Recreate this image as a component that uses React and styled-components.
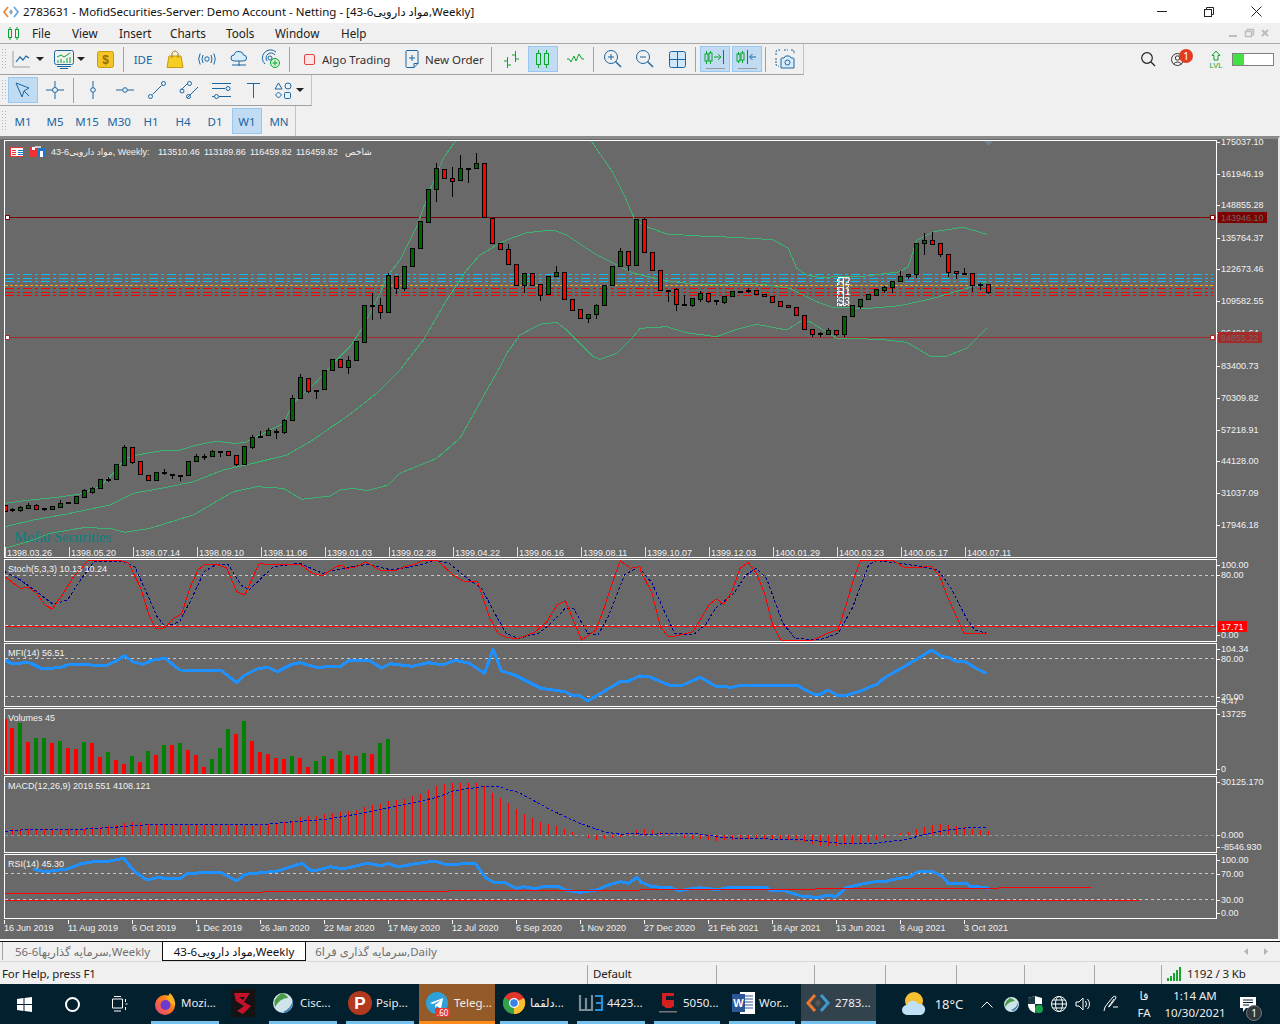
import React from 'react';
import styled, { createGlobalStyle } from 'styled-components';

const UI = '"Noto Sans", "DejaVu Sans", sans-serif';
const CH = '"Liberation Sans", "DejaVu Sans", sans-serif';

const Global = createGlobalStyle`
  html, body { margin: 0; padding: 0; background: #f0f0f0; }
  #root { width: 1280px; height: 1024px; overflow: hidden; }
  * { box-sizing: border-box; }
`;

const Page = styled.div`
  width: 1280px; height: 1024px; display: flex; flex-direction: column;
  font-family: ${UI}; font-size: 12px; color: #111; background: #f0f0f0;
`;

/* ---------- title and menu ---------- */
const TitleBar = styled.div`
  height: 23px; background: #fff; display: flex; align-items: center; padding-left: 3px; flex: none;
`;
const TitleText = styled.div`
  margin-left: 4px; flex: 1; font-size: 11.5px; white-space: nowrap;
`;
const WinBtn = styled.div`
  width: 46px; height: 23px; display: flex; align-items: center; justify-content: center; margin-right: 1px;
`;
const MenuBar = styled.div`
  height: 20px; display: flex; align-items: center; flex: none; padding-left: 7px;
`;
const MenuItem = styled.span`
  font-size: 11.7px; width: ${p => p.$w}px; flex: none; color: #222; line-height: 18px;
`;
const MdiBtns = styled.div`
  margin-left: auto; display: flex; gap: 7px; padding-right: 11px; align-items: center;
`;

/* ---------- toolbars ---------- */
const ToolRow = styled.div`
  height: ${p => p.$h}px; flex: none; display: flex; align-items: stretch;
  border-top: ${p => (p.$first ? '1px solid #a8a8a8' : 'none')};
`;
const ToolBar = styled.div`
  width: ${p => p.$w}px; flex: none; display: flex; align-items: center; gap: 2px;
  border-bottom: ${p => (p.$noBottom ? 'none' : '1px solid #a0a0a0')}; border-right: 1px solid #c4c4c4;
  padding-left: 1px;
`;
const Grip = styled.div`
  width: 5px; height: 22px; flex: none;
  background-image: radial-gradient(#b4b4b4 0.8px, transparent 1px);
  background-size: 3px 3px;
`;
const Btn = styled.div`
  width: ${p => p.$w || 30}px; height: 26px; flex: none; display: flex; align-items: center;
  justify-content: ${p => (p.$pad ? 'flex-start' : 'center')}; padding-left: ${p => p.$pad || 0}px; gap: ${p => p.$gap || 0}px;
  color: ${p => p.$ink || '#1a66a3'}; font-size: 11.5px;
  background: ${p => (p.$on ? '#c1dbf3' : 'transparent')};
  border: 1px solid ${p => (p.$on ? '#97c8f2' : 'transparent')};
  white-space: nowrap; margin-left: ${p => p.$ml || 0}px;
`;
const Sep = styled.div`
  width: 1px; height: 25px; background: #a0a0a0; flex: none; margin: 0 2px 0 1px;
`;
const Arrow = styled.i`
  width: 0; height: 0; border-left: 4px solid transparent; border-right: 4px solid transparent; border-top: 4px solid #222; flex: none;
`;
const Right = styled.div`
  margin-left: auto; display: flex; align-items: center; height: 30px; padding-right: 6px;
`;
const Badge = styled.span`
  position: absolute; left: 8px; top: 0; width: 14px; height: 14px; border-radius: 50%; background: #e33b22; color: #fff;
  font-size: 10px; line-height: 14px; text-align: center;
`;
const BellWrap = styled.div`
  position: relative; width: 24px; height: 20px; display: flex; align-items: center; margin-left: 16px;
`;
const Progress = styled.div`
  width: 42px; height: 13px; border: 1px solid #808080; background: #fff; margin-left: 3px;
`;
const ProgressFill = styled.div`
  width: 11px; height: 100%; background: #43e243;
`;

/* ---------- chart window ---------- */
const ChartWindow = styled.div`
  height: 805px; flex: none; background: #696969; border-top: 3px solid #8a8a8a; border-right: 2px solid #e8e8e8; border-bottom: 2px solid #fff;
  padding: 1px 0 0 4px; display: flex; flex-direction: column; gap: 1px;
`;
const Pane = styled.div`
  display: flex; height: ${p => p.$h}px; flex: none;
`;
const Plot = styled.div`
  width: 1213px; flex: none; border: 1px solid #fff; overflow: hidden;
`;
const Draw = styled.svg`
  display: block; font-family: ${CH}; font-size: 9px;
`;
const AxisDraw = styled.svg`
  display: block; flex: none; font-family: ${CH}; font-size: 9px; overflow: visible;
`;

/* ---------- tabs, status ---------- */
const TabRow = styled.div`
  height: 21px; flex: none; display: flex; align-items: flex-start; padding-left: 2px; border-top: 1px solid #111; border-bottom: 1px solid #d8d8d8;
`;
const Tab = styled.div`
  width: ${p => p.$w}px; height: ${p => (p.$on ? 19 : 18)}px; flex: none; display: flex; align-items: center; justify-content: center;
  font-size: 11.5px; white-space: nowrap; color: ${p => (p.$on ? '#111' : '#707070')};
  background: ${p => (p.$on ? '#fff' : '#f0f0f0')};
  border-left: ${p => (p.$on ? '1px solid #111' : p.$b ? '1px solid #a0a0a0' : 'none')};
  border-right: ${p => (p.$on ? '1.5px solid #111' : 'none')};
  border-bottom: ${p => (p.$on ? '1.5px solid #111' : 'none')};
`;
const TabArrows = styled.div`
  margin-left: auto; display: flex; gap: 15px; padding: 6px 11px 0 0;
`;
const StatusBar = styled.div`
  height: 22px; flex: none; display: flex; align-items: flex-end; font-size: 11.5px; letter-spacing: -0.15px; color: #222; overflow: hidden;
`;
const StatusCell = styled.div`
  width: ${p => p.$w}px; flex: none; height: 19px; display: flex; align-items: center; gap: 5px;
  padding: 0 0 2px ${p => p.$pad || 0}px; border-left: ${p => (p.$line ? '1px solid #a8a8a8' : 'none')}; white-space: nowrap;
`;

/* ---------- taskbar ---------- */
const Taskbar = styled.div`
  height: 40px; flex: none; background: #03202e; display: flex; align-items: stretch; color: #fff; font-size: 11.5px; position: relative;
`;
const TaskIcon = styled.div`
  width: ${p => p.$w || 48}px; flex: none; display: flex; align-items: center; justify-content: center;
`;
const TaskApp = styled.div`
  width: ${p => p.$w}px; margin-left: ${p => p.$ml || 0}px; flex: none; display: flex; align-items: center; gap: ${p => p.$gap || 4}px; padding-left: ${p => p.$pad || 2}px;
  background: ${p => (p.$bg || 'transparent')}; color: #eee; white-space: nowrap; position: relative;
  border-bottom: ${p => (p.$line ? `3px solid ${p.$line}` : 'none')};
  padding-bottom: ${p => (p.$line ? 0 : 3)}px;
`;
const Count = styled.span`
  position: absolute; left: 16px; top: 24px; background: #e53935; color: #fff; font-size: 8px; line-height: 9px; padding: 0 2px; border-radius: 1px;
`;
const Tray = styled.div`
  flex: none; display: flex; align-items: center; width: ${p => p.$w}px; justify-content: center; margin-left: ${p => p.$ml || 0}px;
`;
const TrayText = styled.div`
  flex: none; width: ${p => p.$w}px; margin-left: ${p => p.$ml || 0}px; font-size: ${p => p.$s || 11.5}px; text-align: center; line-height: 17px; color: #eee; align-self: center; white-space: nowrap;
`;
const Note = styled.span`
  position: absolute; right: 18px; top: 21px; width: 16px; height: 16px; border-radius: 50%; background: #30383e; border: 1px solid #777; color: #fff; font-size: 10px; line-height: 14px; text-align: center;
`;

/* ---------- chart data (read from the picture) ---------- */
const C = [
 [15,1096,1112,1094,1112,'r'],[37,1106,1111,1105,1112,'f'],[61,1100,1110,1097,1112,'g'],[85,1095,1103,1090,1104,'g'],[109,1095,1106,1092,1106,'r'],[133,1105,1107,1105,1110,'f'],[157,1099,1106,1099,1106,'g'],[181,1090,1100,1080,1100,'g'],[205,1087,1090,1087,1090,'f'],[229,1069,1088,1069,1088,'g'],[253,1051,1070,1047,1070,'g'],[277,1044,1055,1040,1058,'g'],[301,1018,1043,1018,1043,'g'],[325,1016,1018,1010,1024,'f'],[349,973,1016,973,1016,'g'],[373,921,974,915,974,'g'],[397,922,965,922,968,'r'],[421,964,1003,964,1003,'r'],[445,1004,1021,1004,1021,'r'],[469,996,1021,996,1021,'g'],[493,997,1000,987,1001,'f'],[517,1001,1003,1001,1013,'f'],[541,1004,1006,1004,1020,'f'],[565,964,1004,964,1006,'g'],[589,949,964,942,964,'g'],[613,948,950,942,957,'f'],[637,933,949,929,949,'g'],[661,934,936,934,947,'f'],[685,934,946,934,946,'r'],[709,946,973,946,976,'r'],[733,919,971,919,971,'g'],[757,890,920,885,923,'g'],[781,887,889,873,890,'f'],[805,871,886,864,886,'g'],[829,874,876,868,893,'f'],[853,841,876,838,878,'g'],[877,775,841,765,841,'g'],[901,712,775,702,775,'g'],[925,715,754,715,756,'r'],[949,751,753,751,774,'f'],[973,691,748,691,748,'g'],[997,658,691,658,691,'g'],[1021,658,682,658,682,'r'],[1045,661,682,648,698,'g'],[1069,604,661,604,661,'g'],[1093,496,607,496,607,'g'],[1117,494,496,459,536,'f'],[1141,496,515,474,533,'r'],[1165,405,515,400,515,'g'],[1189,409,443,409,459,'r'],[1213,379,443,379,449,'g'],[1237,325,379,325,379,'g'],[1261,244,325,244,325,'g'],[1285,148,245,148,245,'g'],[1309,85,148,69,182,'g'],[1333,88,115,88,115,'r'],[1357,115,122,82,167,'r'],[1381,85,121,45,121,'g'],[1405,84,86,84,125,'f'],[1429,70,85,40,85,'g'],[1453,70,232,70,232,'r'],[1477,233,310,233,310,'r'],
 [1501,310,328,310,328,'r'],[1525,328,373,312,373,'r'],[1549,373,436,373,436,'r'],[1573,400,436,400,455,'g'],[1597,400,434,400,436,'r'],[1621,433,466,433,480,'r'],[1645,409,463,409,463,'g'],[1669,397,407,378,407,'g'],[1693,397,478,397,478,'r'],[1717,478,509,478,511,'r'],[1741,508,535,508,535,'r'],[1765,523,535,523,545,'g'],[1789,496,523,492,533,'g'],[1813,436,496,436,496,'g'],[1837,379,436,379,436,'g'],[1861,334,379,325,379,'g'],[1885,334,376,334,390,'r'],[1909,238,376,238,376,'g'],[1933,238,337,234,337,'r'],[1957,337,391,337,391,'r'],[1981,391,451,391,451,'r'],[2005,449,451,449,482,'f'],[2029,448,493,445,509,'r'],[2053,492,494,465,494,'f'],[2077,475,494,475,497,'g'],[2101,460,476,454,482,'g'],[2125,460,482,460,485,'r'],[2149,481,483,481,491,'f'],[2173,469,485,469,489,'g'],[2197,454,469,454,469,'g'],[2221,452,454,452,454,'f'],[2245,450,452,445,456,'f'],[2269,451,463,451,463,'r'],[2293,463,469,463,469,'r'],[2317,469,485,469,485,'r'],[2341,484,497,484,497,'r'],[2365,496,502,496,502,'r'],[2389,502,526,502,526,'r'],[2413,526,568,526,568,'r'],[2437,568,583,568,587,'r'],[2461,580,582,576,587,'f'],[2485,571,581,564,581,'g'],[2509,571,581,571,584,'r'],[2533,529,581,529,587,'g'],[2557,496,529,496,529,'g'],[2581,478,497,478,503,'g'],[2605,463,478,463,478,'g'],[2629,448,466,448,466,'g'],[2653,442,449,438,455,'g'],[2677,424,442,424,456,'g'],[2701,409,424,394,424,'g'],[2725,403,409,403,414,'g'],[2749,310,403,310,410,'g'],[2773,301,308,279,341,'g'],[2797,301,311,276,311,'r'],[2821,310,341,310,347,'r'],[2845,341,395,341,407,'r'],[2869,394,400,394,413,'r'],[2893,399,401,385,401,'f'],[2917,400,435,400,452,'r'],[2941,433,435,428,447,'f'],[2965,433,455,433,458,'r'],
];
const UP = [[15,1090],[90,1080],[170,1072],[240,1062],[300,1040],[340,1000],[375,955],[410,945],[480,933],[540,930],[590,915],[650,904],[700,910],[735,908],[790,880],[850,850],[880,790],[905,765],[950,725],[990,680],[1050,620],[1090,560],[1130,480],[1165,405],[1200,360],[1250,260],[1290,150],[1330,55],[1365,5],[1450,-200],[1700,-200],[1775,5],[1840,100],[1870,160],[1905,240],[1940,260],[2000,282],[2100,288],[2200,292],[2300,298],[2320,300],[2365,325],[2390,385],[2420,405],[2460,412],[2600,408],[2700,395],[2725,380],[2750,300],[2800,275],[2890,262],[2960,283]];
const MID = [[15,1160],[100,1140],[200,1122],[330,1095],[400,1060],[500,1042],[580,1025],[670,990],[760,970],[860,945],[930,905],[1040,830],[1130,760],[1200,690],[1270,600],[1340,480],[1400,390],[1440,345],[1500,310],[1520,300],[1580,278],[1660,270],[1700,285],[1790,345],[1900,400],[2000,422],[2100,435],[2250,430],[2300,435],[2370,445],[2450,485],[2500,503],[2610,505],[2700,497],[2800,475],[2900,445],[2960,425]];
const LOW = [[15,1225],[100,1200],[150,1180],[250,1163],[330,1165],[375,1177],[450,1165],[580,1125],[700,1055],[770,1040],[850,1045],[905,1078],[990,1068],[1020,1050],[1060,1045],[1100,1052],[1165,1035],[1200,1000],[1310,955],[1380,895],[1500,680],[1520,640],[1560,585],[1620,553],[1670,547],[1700,570],[1780,650],[1800,658],[1850,640],[1900,590],[1920,565],[2000,560],[2060,578],[2150,590],[2210,568],[2270,553],[2360,570],[2400,545],[2430,545],[2510,595],[2640,598],[2720,607],[2790,648],[2840,648],[2900,625],[2960,565]];

const Z = 2.45;
const join = (a, b) => [...a.map(([x, y]) => [x / Z, y / 3 + 555]), ...b.map(([x, y]) => [640 + x / Z, y / 3 + 555])];
const path3 = pts => pts.map(([x, y]) => `${(x / 3).toFixed(1)},${(y / 3 + 140).toFixed(1)}`).join(' ');
const pathS = pts => pts.map(([x, y]) => `${x.toFixed(1)},${y.toFixed(1)}`).join(' ');

const STOCH = join(
 [[12,65],[50,100],[70,97],[90,115],[110,150],[128,162],[150,125],[180,65],[215,18],[250,17],[290,15],[315,25],[345,100],[365,180],[382,222],[405,218],[425,190],[445,178],[465,100],[485,45],[500,30],[530,28],[555,38],[580,110],[600,120],[635,25],[665,30],[700,27],[735,27],[765,55],[790,62],[820,38],[835,30],[850,40],[875,35],[895,20],[930,45],[970,47],[990,35],[1010,30],[1040,15],[1070,15],[1110,60],[1135,78],[1170,80],[1200,190],[1220,235],[1240,248],[1270,250],[1310,232],[1340,200],[1365,150],[1385,137],[1425,255],[1460,225],[1480,160],[1505,65],[1520,17],[1545,40],[1568,35]],
 [[0,45],[30,115],[50,215],[70,246],[90,242],[130,230],[170,148],[188,132],[205,148],[225,110],[245,40],[265,22],[285,55],[305,115],[325,210],[345,255],[420,257],[465,232],[485,225],[505,150],[525,65],[540,17],[620,17],[650,38],[715,35],[735,65],[750,115],[790,225],[795,235],[850,235]]);
const STOCH2 = join(
 [[12,50],[50,75],[90,110],[130,148],[165,135],[200,70],[230,20],[300,18],[330,35],[360,115],[385,185],[405,215],[440,200],[470,130],[500,50],[530,28],[560,30],[590,90],[610,105],[640,70],[670,35],[735,25],[790,55],[840,40],[900,28],[960,45],[1030,30],[1065,15],[1100,25],[1150,75],[1180,100],[1210,170],[1240,235],[1270,250],[1320,235],[1350,205],[1385,160],[1405,160],[1440,235],[1465,240],[1490,185],[1530,60],[1568,33]],
 [[0,40],[30,85],[60,170],[85,235],[130,240],[160,210],[185,160],[230,115],[260,60],[285,40],[310,70],[350,205],[380,250],[440,255],[485,235],[520,160],[560,30],[580,17],[640,25],[690,35],[730,45],[760,95],[800,190],[820,225],[850,235]]);
const MFI = join(
 [[12,315],[30,327],[70,322],[105,342],[150,337],[170,327],[260,332],[285,318],[305,302],[325,320],[350,328],[375,315],[405,310],[440,345],[490,346],[540,345],[580,382],[600,360],[630,342],[655,337],[680,350],[715,328],[735,323],[775,337],[835,334],[855,316],[905,316],[935,340],[955,326],[1010,334],[1050,323],[1085,330],[1115,316],[1150,325],[1187,355],[1208,283],[1228,347],[1260,360],[1325,400],[1385,410],[1405,423],[1420,422],[1440,438],[1520,380],[1540,378],[1568,362]],
 [[0,364],[25,366],[70,390],[105,390],[148,367],[185,393],[225,397],[245,391],[350,393],[385,391],[425,418],[440,419],[460,405],[485,422],[505,421],[540,408],[580,388],[600,368],[675,315],[715,285],[740,305],[755,307],[775,319],[795,319],[830,345],[850,355]]);
const RSI = join(
 [[80,942],[110,950],[165,942],[200,926],[240,918],[270,918],[303,910],[330,950],[360,975],[385,968],[440,972],[460,955],[540,952],[580,978],[600,958],[680,948],[740,925],[760,945],[780,945],[810,935],[840,942],[900,925],[935,932],[950,925],[975,936],[1010,928],[1065,918],[1090,928],[1165,926],[1190,968],[1210,982],[1235,982],[1265,1000],[1285,995],[1310,1001],[1340,993],[1365,993],[1385,1005],[1420,1012],[1465,1004],[1490,990],[1520,980],[1540,985],[1560,968],[1568,975]],
 [[0,980],[30,995],[75,998],[95,1007],[120,1002],[145,998],[190,1004],[220,997],[270,996],[310,998],[320,1007],[355,1008],[400,1025],[440,1027],[460,1020],[480,1025],[505,998],[540,988],[575,980],[605,978],[630,971],[660,966],[680,950],[715,949],[740,963],[755,985],[800,985],[810,995],[850,997],[853,1005]]);
const MACD_SIG = join(
 [[12,829],[60,824],[200,823],[300,815],[330,811],[400,808],[500,810],[650,808],[720,800],[800,793],[900,772],[1000,747],[1070,727],[1110,708],[1180,695],[1220,695],[1270,712],[1350,765],[1420,805],[1480,830],[1520,838],[1568,835]],
 [[0,838],[30,838],[70,835],[140,836],[200,847],[250,851],[380,853],[430,857],[490,865],[580,864],[650,854],[700,838],[760,824],[810,817],[850,817]]);
const VOL = [[12,'r',492],[29,'r',519],[49,'g',505],[69,'r',561],[88,'g',549],[108,'g',549],[127,'r',564],[147,'g',558],[167,'r',579],[186,'r',582],[206,'g',561],[225,'r',564],[245,'r',606],[265,'g',591],[284,'r',615],[304,'r',627],[323,'g',603],[343,'r',621],[362,'g',588],[382,'r',600],[402,'g',570],[421,'r',570],[441,'g',564],[461,'r',585],[480,'r',600],[500,'r',636],[519,'g',612],[539,'g',579],[559,'g',522],[578,'r',537],[598,'g',498],[617,'r',558],[637,'r',591],[657,'r',597],[676,'r',609],[696,'r',612],[716,'g',603],[735,'r',609],[755,'r',636],[774,'g',618],[794,'g',603],[813,'r',612],[833,'g',588],[853,'r',600],[872,'r',603],[892,'g',594],[911,'r',597],[931,'g',564],[951,'g',552]];
const HIST = [823,823,823,823,823,823,823,823,822,822,817,817,813,809,803,800,804,806,807,807,809,809,811,808,811,810,811,811,810,812,812,809,806,805,802,797,786,783,783,777,774,772,769,766,757,751,747,739,736,732,724,718,706,694,688,685,685,685,685,694,715,730,744,762,778,790,802,808,814,823,832,840,850,855,852,850,845,835,826,
 822,826,832,838,840,850,852,852,854,858,856,854,854,852,852,852,854,854,856,858,860,866,872,872,873,870,868,866,860,855,850,840,835,830,822,816,810,807,810,812,816,821,825,828];

const Levels = ({ ys }) => ys.map(y => <line key={y} x1="5" x2="1216" y1={y + 0.5} y2={y + 0.5} stroke="#c8c8c8" strokeDasharray="3 3" shapeRendering="crispEdges" />);

const Candles = () => (
  <g shapeRendering="crispEdges">
    {C.map(([zx, t, b, wt, wb, k]) => {
      const cx = Math.round(zx / 3);
      const Y = v => Math.round(v / 3 + 140);
      if (k === 'f') {
        return (
          <g key={zx}>
            <line x1={cx + 0.5} x2={cx + 0.5} y1={Y(wt)} y2={Y(wb) + 1} stroke="#000" />
            <rect x={cx - 2} y={Y(t)} width="5" height="1.5" fill="#000" />
          </g>
        );
      }
      return (
        <g key={zx}>
          <line x1={cx + 0.5} x2={cx + 0.5} y1={Y(wt)} y2={Y(wb) + 1} stroke="#000" />
          <rect x={cx - 1.5} y={Y(t) + 0.5} width="4" height={Math.max(1, Y(b) - Y(t))} fill={k === 'g' ? '#006400' : '#ff0000'} stroke="#000" />
        </g>
      );
    })}
  </g>
);

const DD = ({ y, c, d = '9 3 3 3' }) => <line x1="5" x2="1213" y1={y + 0.5} y2={y + 0.5} stroke={c} strokeDasharray={d} shapeRendering="crispEdges" />;
const Handle = ({ x, y, c }) => <rect x={x - 2.5} y={y - 2} width="4" height="4" fill="#fff" stroke={c} shapeRendering="crispEdges" />;
const Curve = ({ pts, c, w = 1, d }) => <polyline points={pts} fill="none" stroke={c} strokeWidth={w} strokeDasharray={d} shapeRendering="crispEdges" strokeLinejoin="round" />;

const T = ({ x, y, c = '#f2f2f2', children, a }) => <text x={x} y={y} fill={c} textAnchor={a}>{children}</text>;

const MainLabels = ['1398.03.26','1398.05.20','1398.07.14','1398.09.10','1398.11.06','1399.01.03','1399.02.28','1399.04.22','1399.06.16','1399.08.11','1399.10.07','1399.12.03','1400.01.29','1400.03.23','1400.05.17','1400.07.11'];
const TimeLabels = ['16 Jun 2019','11 Aug 2019','6 Oct 2019','1 Dec 2019','26 Jan 2020','22 Mar 2020','17 May 2020','12 Jul 2020','6 Sep 2020','1 Nov 2020','27 Dec 2020','21 Feb 2021','18 Apr 2021','13 Jun 2021','8 Aug 2021','3 Oct 2021'];

const Sym = 'مواد دارویی6-43';

const MainPlot = () => (
  <Draw width="1211" height="416" viewBox="5 141 1211 416">
    <text x="14" y="541.5" fontFamily='"Liberation Serif", serif' fontSize="14.5" fill="#0a8080">Mofid Securities</text>
    <DD y={274} c="#00bfff" /><DD y={278} c="#00bfff" /><DD y={281} c="#00bfff" />
    <DD y={285} c="#ffa500" d="3 2" />
    <DD y={288} c="#ff0000" /><DD y={292} c="#ff0000" /><DD y={295} c="#ff0000" />
    <line x1="5" x2="1216" y1="217.5" y2="217.5" stroke="#7f0000" shapeRendering="crispEdges" />
    <line x1="5" x2="1216" y1="337.5" y2="337.5" stroke="#a52a2a" shapeRendering="crispEdges" />
    <Curve pts={path3(UP)} c="#3cb371" />
    <Curve pts={path3(MID)} c="#3cb371" />
    <Curve pts={path3(LOW)} c="#3cb371" />
    <Candles />
    <Handle x={8} y={217} c="#7f0000" /><Handle x={1213} y={217} c="#7f0000" />
    <Handle x={8} y={337} c="#a52a2a" /><Handle x={1213} y={337} c="#a52a2a" />
    <g fontSize="10">
      <T x="837.5" y="285" c="#fff">R2</T>
      <T x="837.5" y="295" c="#fff">R1</T>
      <T x="837.5" y="305" c="#fff">S3</T>
    </g>
    <rect x="837.5" y="277.5" width="6" height="28" fill="none" stroke="#fff" strokeDasharray="3 1" shapeRendering="crispEdges" />
    <rect x="843.5" y="277.5" width="5" height="28" fill="none" stroke="#e8e8e8" strokeDasharray="2 2" shapeRendering="crispEdges" />
    <polygon points="984,141 993,141 988.5,146" fill="#708090" />
    {/* header icons */}
    <g shapeRendering="crispEdges">
      <rect x="10.5" y="147.5" width="13" height="9" fill="#fff" stroke="#e33" />
      <path d="M12 150h4M12 152h4M12 154h4" stroke="#e33" />
      <path d="M18 150h5M18 152h5M18 154h5" stroke="#1c78c8" />
      <rect x="30" y="147" width="7" height="10" fill="#e33" />
      <rect x="32" y="147" width="3" height="3" fill="#fff" />
      <rect x="38" y="148" width="7" height="9" fill="#1c78c8" />
      <rect x="40" y="151" width="3" height="6" fill="#fff" />
      <rect x="35" y="146" width="6" height="2" fill="#ccc" />
    </g>
    <T x="51" y="155">{`${Sym}, Weekly:`}</T>
    <T x="158" y="155">113510.46</T>
    <T x="204" y="155">113189.86</T>
    <T x="250" y="155">116459.82</T>
    <T x="296" y="155">116459.82</T>
    <T x="345" y="155">شاخص</T>
    {MainLabels.map((t, i) => (
      <g key={t}>
        <line x1={5.5 + i * 64} x2={5.5 + i * 64} y1="547" y2="557" stroke="#cfe8cf" shapeRendering="crispEdges" />
        <T x={7 + i * 64} y="556">{t}</T>
      </g>
    ))}
  </Draw>
);

const Axis = ({ top, h, ticks, children }) => (
  <AxisDraw width="61" height={h} viewBox={`1217 ${top} 61 ${h}`}>
    {ticks.map(([y, t]) => (
      <g key={t}>
        <line x1="1217" x2="1220" y1={Math.round(y) + 0.5} y2={Math.round(y) + 0.5} stroke="#fff" shapeRendering="crispEdges" />
        <T x="1221" y={y + 3}>{t}</T>
      </g>
    ))}
    {children}
  </AxisDraw>
);
const Box = ({ x, y, w, h, c }) => <rect x={x} y={y} width={w} height={h} fill={c} />;

/* ---------- toolbar icons ---------- */
const I = styled.svg`
  display: block; flex: none; overflow: visible;
`;
const ink = '#1a66a3';
const grn = '#0aa52c';
const LineIco = () => (<I width="20" height="18" fill="none"><path d="M1 1v16h17" stroke="#9aa0a6"/><path d="M4 12l4-5 3 3 3-4 3 2" stroke={ink} strokeWidth="1.2"/></I>);
const MonitorIco = () => (<I width="20" height="19" fill="none"><rect x="0.5" y="0.5" width="19" height="14" rx="2" stroke={ink}/><path d="M3 7l4-2 3 2 6-4" stroke={grn}/><path d="M4 13v-3M7 13V9M10 13v-2M13 13V8M16 13V7" stroke={grn}/><path d="M3 16.5h14M6 18.5h8" stroke={ink}/></I>);
const DollarIco = () => (<I width="17" height="17"><rect x="0.5" y="0.5" width="16" height="16" rx="2" fill="#f5c425" stroke="#c99a12"/><text x="8.5" y="13" fontSize="12" fontWeight="700" textAnchor="middle" fill="#9a6a00" fontFamily={CH}>$</text></I>);
const BagIco = () => (<I width="16" height="18" fill="none"><path d="M2 6h12l2 11.5H0z" fill="#f7cd22" stroke="#c99a12"/><path d="M5 8V3q3-4 6 0v5" stroke="#a87c10"/></I>);
const RadioIco = () => (<I width="18" height="12" fill="none" stroke={ink}><circle cx="9" cy="6" r="2.2"/><path d="M5 2q-2 4 0 8M13 2q2 4 0 8M2.2 .5q-3 5.5 0 11M15.8 .5q3 5.5 0 11"/></I>);
const CloudIco = () => (<I width="18" height="16" fill="none" stroke={ink}><path d="M4 10a3 3 0 0 1 0-6q1-4 5-3.5 4 0 4.5 3.5a3 3 0 0 1 0 6z" fill="#d8ecfa"/><path d="M9 10v5M2 14h14"/></I>);
const RingIco = () => (<I width="18" height="18" fill="none"><path d="M14 2A8 8 0 1 0 3 14M13 5A5 5 0 1 0 5 11" stroke={ink}/><circle cx="8" cy="8" r="2" stroke={ink}/><circle cx="13" cy="13" r="4.5" fill="#d4f5d4" stroke={grn}/><path d="M13 10.5v5M10.5 13h5" stroke={grn}/></I>);
const DocIco = () => (<I width="14" height="18" fill="none" stroke={ink}><path d="M1 1.5q0-1 1-1h10q1 0 1 1v12l-4 4H2q-1 0-1-1z"/><path d="M7 5v6M4 8h6"/><path d="M13 13.5H9v4"/></I>);
const BarsIco = () => (<I width="17" height="17" fill="none" stroke={grn}><path d="M4.5 6v11M4.5 10H1M4.5 14H8M12.5 0v11M12.5 4H9M12.5 8H16"/></I>);
const CandIco = () => (<I width="14" height="18" fill="none" stroke={grn}><path d="M2.5 0v3M2.5 15v3M10.5 0v3M10.5 15v3"/><rect x=".5" y="3.5" width="4" height="11"/><rect x="8.5" y="3.5" width="4" height="11"/></I>);
const WaveIco = () => (<I width="17" height="10" fill="none" stroke={grn}><path d="M0 5h2l2 3 3-6 2 5 3-7 3 5h2"/></I>);
const MagIco = ({ plus }) => (<I width="18" height="18" fill="none" stroke={ink}><circle cx="7" cy="7" r="6.5"/><path d="M4 7h6"/>{plus && <path d="M7 4v6"/>}<path d="M11.5 11.5L17 17" strokeWidth="1.4"/></I>);
const GridIco = () => (<I width="17" height="17"><rect x=".5" y=".5" width="16" height="16" rx="2" fill="#cfe8fb" stroke={ink}/><path d="M8.5 1v15M1 8.5h15" stroke={ink}/></I>);
const ScrollIco = ({ flip }) => (
  <I width="20" height="19" fill="none">
    {flip ? (<><path d="M1.5 2v3M1.5 11v2M5.5 1v2M5.5 10v3" stroke={grn}/><rect x="0" y="4" width="3" height="7" stroke={grn}/><rect x="4" y="3" width="3" height="7" stroke={grn}/><path d="M10.5 0v14" stroke={ink}/><path d="M19 7h-6M15.5 4l-3 3 3 3" stroke={ink}/></>)
    : (<><path d="M1.5 1v3M1.5 11v3M5.5 1v2M5.5 11v3" stroke={grn}/><rect x="0" y="4" width="3" height="7" stroke={grn}/><rect x="4" y="3" width="3" height="8" stroke={grn}/><path d="M9 7h7M13 4l3 3-3 3" stroke={grn}/><path d="M18.5 0v14" stroke={ink}/></>)}
    <path d="M1 18.5h19" stroke="#9a9a9a"/>
  </I>
);
const CamIco = () => (<I width="20" height="20" fill="none" stroke={ink}><path d="M1 6V3q0-2 2-2h3M9 1h4M16 1h2q1 0 1 2v2M1 9v6q0 2 2 2h1" strokeDasharray="2 1"/><path d="M6 19V10q0-1 1-1h2l1.5-2h4L16 9h2q1 0 1 1v9z" fill="#d8ecfa"/><circle cx="12.5" cy="13.5" r="2.5"/></I>);
const CursorIco = () => (<I width="16" height="16" fill="none" stroke={ink}><path d="M1 1l13 5-5 3-2 6z" /><path d="M9 9l5 5"/></I>);
const CrossIco = () => (<I width="18" height="18" fill="none" stroke={ink}><path d="M9 0v6M9 12v6M0 9h6M12 9h6"/><circle cx="9" cy="9" r="2.5"/></I>);
const VIco = () => (<I width="6" height="18" fill="none" stroke={ink}><path d="M3 0v6.5M3 11.5V18"/><circle cx="3" cy="9" r="2.3"/></I>);
const HIco = () => (<I width="18" height="6" fill="none" stroke={ink}><path d="M0 3h6.5M11.5 3H18"/><circle cx="9" cy="3" r="2.3"/></I>);
const TrendIco = () => (<I width="18" height="18" fill="none" stroke={ink}><path d="M4.5 13.5L13.5 4.5"/><circle cx="2.5" cy="15.5" r="2"/><circle cx="15.5" cy="2.5" r="2"/></I>);
const ChanIco = () => (<I width="19" height="18" fill="none" stroke={ink}><path d="M1 9l7-7M7 17l11-11"/><circle cx="2" cy="10" r="2"/><circle cx="9.5" cy="2.5" r="2" /><circle cx="8.5" cy="15.5" r="2"/></I>);
const FibIco = () => (<I width="19" height="16" fill="none" stroke={ink}><path d="M0 1.5h19M0 6.5h13M0 14.5h2"/><path d="M7 14.5h12"/><circle cx="16" cy="6.5" r="2"/><circle cx="4.5" cy="14.5" r="2"/></I>);
const TIco = () => (<I width="13" height="15" fill="none" stroke={ink}><path d="M0 .5h13M6.5 .5V15"/></I>);
const ShapesIco = () => (<I width="18" height="17" fill="none" stroke={ink}><path d="M4.5 1L8 7H1z"/><circle cx="14" cy="4" r="3"/><path d="M4.5 10l3 3-3 3-3-3z"/><rect x="10.5" y="10.5" width="6" height="6" rx="1"/></I>);
const SearchIco = () => (<I width="14" height="14" fill="none" stroke="#222" strokeWidth="1.2"><circle cx="6" cy="6" r="5.3"/><path d="M10 10l4 4"/></I>);
const UserIco = () => (<I width="13" height="13" fill="none" stroke="#333"><circle cx="6.5" cy="6.5" r="6"/><circle cx="6.5" cy="5" r="2.2"/><path d="M2.5 11q4-4 8 0"/></I>);
const LvlIco = () => (<I width="14" height="17"><path d="M7 0l4 4.5H9V9H5V4.5H3z" fill="none" stroke={grn}/><text x="7" y="16.5" fontSize="7.5" textAnchor="middle" fontFamily={CH} fill={grn}>LVL</text></I>);
const Logo = () => (<I width="16" height="12" fill="none" strokeWidth="1.8"><path d="M5 1L1 6l4 5" stroke="#ef8a3c"/><path d="M11 1l4 5-4 5" stroke="#6aa9d8"/><path d="M8 3l-2 3 2 3 2-3z" fill="#9aa6b0"/></I>);
const MenuCandles = () => (<I width="13" height="13" fill="none" stroke={grn}><path d="M3 0v2.5M3 10.5V13M10 0v2.5M10 10.5V13"/><rect x="1.5" y="2.5" width="3" height="8"/><rect x="8.5" y="2.5" width="3" height="8"/></I>);

/* taskbar icons */
const WinIco = () => (<I width="15" height="15" fill="#fff"><path d="M0 2l6.5-1v6H0zM7.5 1L15 0v7H7.5zM0 8h6.5v6L0 13zM7.5 8H15v7l-7.5-1z"/></I>);
const FoxIco = () => (<I width="22" height="24"><defs><linearGradient id="fx" x1="0" y1="1" x2="1" y2="0"><stop offset="0" stopColor="#e03a8c"/><stop offset="0.6" stopColor="#ff7a1a"/><stop offset="1" stopColor="#ffc21a"/></linearGradient></defs><circle cx="11" cy="14" r="10" fill="url(#fx)"/><path d="M16 2q6 6 5 13-6-4-8-8z" fill="#ffb020"/><circle cx="11.5" cy="14" r="5" fill="#6a3bd0"/></I>);
const RedSIco = () => (<I width="24" height="28"><rect width="24" height="28" fill="#141414"/><path d="M3 4h16l-6 9 7 4-8 8-6-3 7-5-8-5z" fill="#c5112a"/><path d="M8 8h6l-2 3z" fill="#141414"/></I>);
const GlobeIco = () => (<I width="22" height="26"><circle cx="11" cy="13" r="10" fill="#cfe3ea"/><path d="M3 17q-3-8 7-14 5 2 6 5-8 0-13 9z" fill="#4a9a45"/><path d="M21 9q1 9-7 14l-3-1q9-4 10-13z" fill="#3d7fb5"/></I>);
const PsiIco = () => (<I width="24" height="24"><circle cx="12" cy="12" r="12" fill="#b2391e"/><text x="12" y="18" textAnchor="middle" fontSize="17" fontWeight="700" fill="#fff" fontFamily={CH}>P</text></I>);
const TeleIco = () => (<I width="22" height="22"><circle cx="11" cy="11" r="11" fill="#2ea0da"/><path d="M4 11l13-5-2 11-4-3-2 2v-3l6-5-8 4z" fill="#fff"/></I>);
const ChromeIco = () => (<I width="22" height="22"><circle cx="11" cy="11" r="11" fill="#e0352b"/><path d="M11 11L1.5 5.5A11 11 0 0 0 11 22z" fill="#2fa34b" /><path d="M11 11V22A11 11 0 0 0 21 6z" fill="#fbc02d"/><circle cx="11" cy="11" r="5" fill="#fff"/><circle cx="11" cy="11" r="3.8" fill="#3b82e8"/></I>);
const W3Ico = () => (<I width="24" height="18" fill="none" strokeWidth="2.2"><path d="M1 1v15h6V4M7 16h6V1" stroke="#7d8d97"/><path d="M16 2h7v14h-7M17 9h6" stroke="#2b8fd6"/></I>);
const GIco = () => (<I width="18" height="20"><path d="M3 0h12v3H7v4h8v6l-3 2H7l-4-3z" fill="#d32020"/><rect x="0" y="18" width="18" height="1.5" fill="#777"/></I>);
const WordIco = () => (<I width="23" height="24"><rect x="8" y="1" width="15" height="22" fill="#fff"/><path d="M11 5h10M11 8h10M11 11h10M11 14h10M11 17h10" stroke="#2b5797"/><rect y="3" width="13" height="18" fill="#2b5797"/><text x="6.5" y="16" fontSize="11" fontWeight="700" textAnchor="middle" fill="#fff" fontFamily={CH}>W</text></I>);
const MtIco = () => (<I width="24" height="20" fill="none" strokeWidth="3"><path d="M9 2L2 10l7 8" stroke="#e8792e"/><path d="M15 2l7 8-7 8" stroke="#3d9ad1"/><path d="M12 6l-3 4 3 4 3-4z" fill="#555" stroke="none"/></I>);
const WeatherIco = () => (<I width="24" height="24"><circle cx="12" cy="9" r="9" fill="#f7c02f"/><path d="M5 23a5 5 0 0 1 0-10 6 6 0 0 1 11-1 5.5 5.5 0 0 1 3 11z" fill="#bfe0f7"/></I>);

const TB = ({ children, on, w, ink: c, gap, pad, ml }) => <Btn $on={on} $w={w} $ink={c} $gap={gap} $pad={pad} $ml={ml}>{children}</Btn>;

export default function App() {
  return (
    <Page>
      <Global />
      <TitleBar>
        <Logo />
        <TitleText>2783631 - MofidSecurities-Server: Demo Account - Netting - [{Sym},Weekly]</TitleText>
        <WinBtn><I width="10" height="1"><rect width="10" height="1" fill="#222" /></I></WinBtn>
        <WinBtn><I width="10" height="10" fill="none" stroke="#222"><path d="M2.5 2.5v-2h7v7h-2"/><rect x=".5" y="2.5" width="7" height="7"/></I></WinBtn>
        <WinBtn><I width="11" height="11" fill="none" stroke="#222"><path d="M.5 .5l10 10M10.5 .5l-10 10"/></I></WinBtn>
      </TitleBar>
      <MenuBar>
        <MenuItem $w={25}><MenuCandles /></MenuItem>
        <MenuItem $w={40}>File</MenuItem>
        <MenuItem $w={47}>View</MenuItem>
        <MenuItem $w={51}>Insert</MenuItem>
        <MenuItem $w={56}>Charts</MenuItem>
        <MenuItem $w={49}>Tools</MenuItem>
        <MenuItem $w={66}>Window</MenuItem>
        <MenuItem $w={40}>Help</MenuItem>
        <MdiBtns>
          <I width="9" height="8"><rect y="6" width="8" height="2" fill="#bdbdbd" /></I>
          <I width="9" height="8" fill="none" stroke="#bdbdbd" strokeWidth="1.5"><path d="M2.5 2V.5h6v5H7"/><rect x=".5" y="2.5" width="6" height="5"/></I>
          <I width="8" height="8" fill="none" stroke="#bdbdbd" strokeWidth="2"><path d="M1 1l6 6M7 1L1 7"/></I>
        </MdiBtns>
      </MenuBar>
      <ToolRow $first $h={32}>
        <ToolBar $w={804}>
          <Grip />
          <TB w={40} gap={4}><LineIco /><Arrow /></TB>
          <TB w={38} gap={3}><MonitorIco /><Arrow /></TB>
          <TB><DollarIco /></TB>
          <Sep />
          <TB>IDE</TB>
          <TB><BagIco /></TB>
          <TB><RadioIco /></TB>
          <TB><CloudIco /></TB>
          <TB><RingIco /></TB>
          <Sep />
          <TB w={100} ink="#333" gap={7} pad={9}><I width="11" height="11"><rect x=".5" y=".5" width="10" height="10" rx="1.5" fill="#fde5e5" stroke="#e34545" /></I>Algo Trading</TB>
          <TB w={92} ink="#333" gap={6} pad={8}><DocIco />New Order</TB>
          <Sep />
          <TB><BarsIco /></TB>
          <TB on><CandIco /></TB>
          <TB><WaveIco /></TB>
          <Sep />
          <TB><MagIco plus /></TB>
          <TB><MagIco /></TB>
          <TB><GridIco /></TB>
          <Sep />
          <TB on><ScrollIco /></TB>
          <TB on><ScrollIco flip /></TB>
          <Sep />
          <TB><CamIco /></TB>
        </ToolBar>
        <Right>
          <SearchIco />
          <BellWrap><UserIco /><Badge>1</Badge></BellWrap>
          <TB w={26} ml={8}><LvlIco /></TB>
          <Progress><ProgressFill /></Progress>
        </Right>
      </ToolRow>
      <ToolRow $h={31}>
        <ToolBar $w={312}>
          <Grip />
          <TB on><CursorIco /></TB>
          <TB><CrossIco /></TB>
          <Sep />
          <TB><VIco /></TB>
          <TB><HIco /></TB>
          <TB><TrendIco /></TB>
          <TB><ChanIco /></TB>
          <TB><FibIco /></TB>
          <TB><TIco /></TB>
          <TB w={38} gap={4}><ShapesIco /><Arrow /></TB>
        </ToolBar>
      </ToolRow>
      <ToolRow $h={30}>
        <ToolBar $w={296} $noBottom>
          <Grip />
          {['M1', 'M5', 'M15', 'M30', 'H1', 'H4', 'D1', 'W1', 'MN'].map(t => <TB key={t} on={t === 'W1'}>{t}</TB>)}
        </ToolBar>
      </ToolRow>

      <ChartWindow>
        <Pane $h={418}>
          <Plot><MainPlot /></Plot>
          <Axis top={140} h={418} ticks={[[142,'175037.10'],[173.5,'161946.19'],[205,'148855.28'],[237.5,'135764.37'],[269,'122673.46'],[301,'109582.55'],[333,'96491.64'],[365.5,'83400.73'],[397.5,'70309.82'],[429.5,'57218.91'],[461,'44128.00'],[493,'31037.09'],[525,'17946.18']]}>
            <Box x={1218} y={212} w={49} h={11} c="#7f0000" />
            <T x="1221" y={221} c="#696969">143946.10</T>
            <Box x={1218} y={332} w={44} h={11} c="#a52a2a" />
            <T x="1221" y={341} c="#696969">94855.22</T>
          </Axis>
        </Pane>
        <Pane $h={83}>
          <Plot>
            <Draw width="1211" height="81" viewBox="5 560 1211 81">
              <Levels ys={[575, 625]} />
              <line x1="5" x2="1216" y1="626.5" y2="626.5" stroke="#ff0000" shapeRendering="crispEdges" />
              <Curve pts={pathS(STOCH2)} c="#00008b" d="3 2" />
              <Curve pts={pathS(STOCH)} c="#ff0000" />
              <T x="8" y="571.5">Stoch(5,3,3) 10.13 10.24</T>
            </Draw>
          </Plot>
          <Axis top={559} h={83} ticks={[[564.5,'100.00'],[575,'80.00'],[635,'0.00']]}>
            <Box x={1218} y={621} w={29} h={11} c="#ff0000" />
            <T x="1221" y={630}>17.71</T>
          </Axis>
        </Pane>
        <Pane $h={64}>
          <Plot>
            <Draw width="1211" height="62" viewBox="5 644 1211 62">
              <Levels ys={[658, 696]} />
              <Curve pts={pathS(MFI)} c="#1e90ff" w={3} />
              <T x="8" y="656">MFI(14) 56.51</T>
            </Draw>
          </Plot>
          <Axis top={643} h={64} ticks={[[648.5,'104.34'],[658.5,'80.00'],[696.5,'20.00'],[701,'4.47']]} />
        </Pane>
        <Pane $h={67}>
          <Plot>
            <Draw width="1211" height="65" viewBox="5 709 1211 65">
              <g shapeRendering="crispEdges">
                {VOL.map(([x, k, t]) => {
                  const px = Math.round(x / Z), top = Math.round(t / 3 + 555);
                  return <rect key={x} x={px - 2} y={top} width="4" height={774 - top} fill={k === 'g' ? '#008000' : '#ff0000'} />;
                })}
              </g>
              <T x="8" y="721">Volumes 45</T>
            </Draw>
          </Plot>
          <Axis top={708} h={67} ticks={[[713.5,'13725'],[768.5,'0']]} />
        </Pane>
        <Pane $h={77}>
          <Plot>
            <Draw width="1211" height="75" viewBox="5 777 1211 75">
              <line x1="5" x2="1216" y1="835.5" y2="835.5" stroke="#8a9aa8" strokeDasharray="3 3" shapeRendering="crispEdges" />
              <g shapeRendering="crispEdges">
                {HIST.map((t, i) => {
                  const x = 12 + i * 8;
                  const y = Math.round(t / 3 + 555);
                  return <line key={i} x1={x + 0.5} x2={x + 0.5} y1={Math.min(y, 835)} y2={Math.max(y, 835)} stroke="#ff0000" />;
                })}
              </g>
              <Curve pts={pathS(MACD_SIG)} c="#0000cd" d="3 2" />
              <T x="8" y="789">MACD(12,26,9) 2019.551 4108.121</T>
            </Draw>
          </Plot>
          <Axis top={776} h={77} ticks={[[781.5,'30125.170'],[834.5,'0.000'],[846.5,'-8546.930']]} />
        </Pane>
        <Pane $h={65}>
          <Plot>
            <Draw width="1211" height="63" viewBox="5 855 1211 63">
              <Levels ys={[873, 899]} />
              <Curve pts={pathS(RSI)} c="#1e90ff" w={3} />
              <path d="M5 893.5H80M80 892.5H263M263 891.5H449M449 890.5H640" fill="none" stroke="#ff0000" shapeRendering="crispEdges" />
              <path d="M640 889.5H815M815 888.5H999M999 887.5H1091" fill="none" stroke="#ff0000" strokeWidth="1.5" shapeRendering="crispEdges" />
              <line x1="5" x2="1140" y1="900.5" y2="900.5" stroke="#ff0000" shapeRendering="crispEdges" />
              <T x="8" y="867">RSI(14) 45.30</T>
            </Draw>
          </Plot>
          <Axis top={854} h={65} ticks={[[859.5,'100.00'],[873.5,'70.00'],[899.5,'30.00'],[912.5,'0.00']]} />
        </Pane>
        <AxisDraw width="1274" height="19" viewBox="4 920 1274 19">
          {TimeLabels.map((t, i) => (
            <g key={t}>
              <line x1={4.5 + i * 64} x2={4.5 + i * 64} y1="920" y2="924" stroke="#fff" shapeRendering="crispEdges" />
              <T x={4 + i * 64} y="930.5">{t}</T>
            </g>
          ))}
        </AxisDraw>
      </ChartWindow>

      <TabRow>
        <Tab $w={160} $b>سرمایه گذاریها6-56,Weekly</Tab>
        <Tab $w={144} $on>{Sym},Weekly</Tab>
        <Tab $w={140}>سرمایه گذاری فرا6,Daily</Tab>
        <TabArrows>
          <I width="5" height="7"><path d="M4 0L0 3.5 4 7z" fill="#b4b4b4" /></I>
          <I width="5" height="7"><path d="M0 0l4 3.5L0 7z" fill="#b4b4b4" /></I>
        </TabArrows>
      </TabRow>
      <StatusBar>
        <StatusCell $w={587} $pad={2}>For Help, press F1</StatusCell>
        <StatusCell $w={129} $line $pad={5}>Default</StatusCell>
        <StatusCell $w={98} $line />
        <StatusCell $w={71} $line />
        <StatusCell $w={71} $line />
        <StatusCell $w={68} $line />
        <StatusCell $w={70} $line />
        <StatusCell $w={67} $line />
        <StatusCell $w={119} $line $pad={5}>
          <I width="15" height="14" shapeRendering="crispEdges"><path d="M0 11h2v3H0zM3 9h2v5H3zM6 6h2v8H6zM9 3h2v11H9zM12 0h2v14h-2z" fill="#19a52e" /></I>
          1192 / 3 Kb
        </StatusCell>
      </StatusBar>
      <Taskbar>
        <TaskIcon><WinIco /></TaskIcon>
        <TaskIcon><I width="15" height="15" fill="none" stroke="#fff" strokeWidth="2"><circle cx="7.5" cy="7.5" r="6.5" /></I></TaskIcon>
        <TaskIcon><I width="16" height="16" fill="none" stroke="#fff"><path d="M.5 3h10v9H.5zM2 .5h7M2 15h7M13.5 3v3M13.5 8h2M13.5 11v3"/></I></TaskIcon>
        <TaskApp $w={68} $ml={7} $pad={3} $gap={5} $line="#76c2ef"><FoxIco />Mozi...</TaskApp>
        <TaskApp $w={45} $ml={3} $pad={9}><RedSIco /></TaskApp>
        <TaskApp $w={68} $ml={2} $pad={3} $gap={6} $line="#76c2ef"><GlobeIco />Cisc...</TaskApp>
        <TaskApp $w={68} $ml={9} $pad={2} $gap={4} $line="#76c2ef"><PsiIco />Psip...</TaskApp>
        <TaskApp $w={76} $ml={5} $pad={7} $gap={6} $bg="#945a27" $line="#ff8c1a"><TeleIco />Teleg...<Count>.60</Count></TaskApp>
        <TaskApp $w={68} $ml={5} $pad={3} $gap={5} $line="#76c2ef"><ChromeIco />دلقما...</TaskApp>
        <TaskApp $w={68} $ml={9} $pad={2} $gap={4} $line="#76c2ef"><W3Ico />4423...</TaskApp>
        <TaskApp $w={66} $ml={9} $pad={5} $gap={6} $line="#76c2ef"><GIco />5050...</TaskApp>
        <TaskApp $w={66} $ml={9} $pad={3} $gap={4} $line="#76c2ef"><WordIco />Wor...</TaskApp>
        <TaskApp $w={75} $ml={6} $pad={5} $gap={5} $bg="#33434d" $line="#76c2ef"><MtIco />2783...</TaskApp>
        <Tray $w={27} $ml={24}><WeatherIco /></Tray>
        <TrayText $w={38} $ml={3} $s={13}>18°C</TrayText>
        <Tray $w={24} $ml={7}><I width="12" height="7" fill="none" stroke="#fff"><path d="M.5 6.5L6 1l5.5 5.5" /></I></Tray>
        <Tray $w={24}><I width="15" height="15"><circle cx="7.5" cy="7.5" r="7.5" fill="#cfe3ea"/><path d="M1 10Q0 5 6 1q4 1 5 3-6 0-10 6z" fill="#4a9a45"/><path d="M14 5q1 6-5 9l-2-1q6-2 7-8z" fill="#3d7fb5"/></I></Tray>
        <Tray $w={24}><I width="15" height="17"><path d="M7 0l7 2v7q0 5-7 8-7-3-7-8V2z" fill="#fff"/><path d="M7 0v8H0V2zM7 8h7q0 5-7 9z" fill="#1c3644"/><circle cx="11" cy="13" r="4" fill="#18a34a"/></I></Tray>
        <Tray $w={24}><I width="16" height="16" fill="none" stroke="#fff"><circle cx="8" cy="8" r="7.5"/><ellipse cx="8" cy="8" rx="3.5" ry="7.5"/><path d="M.5 8h15M2 4h12M2 12h12"/></I></Tray>
        <Tray $w={24}><I width="16" height="14" fill="none" stroke="#fff"><path d="M1 5h3l4-4v12L4 9H1zM10.5 4q2 3 0 6M12.5 2q4 5 0 10"/></I></Tray>
        <Tray $w={32}><I width="16" height="18" fill="none" stroke="#fff"><path d="M1 16q0-4 4-8l5-6q3-2 3 1l-6 8q-2 2-1 0l5-7"/><path d="M10 12h5"/></I></Tray>
        <TrayText $w={28} $ml={3}>فا<br />FA</TrayText>
        <TrayText $w={64} $ml={5}>1:14 AM<br />10/30/2021</TrayText>
        <Tray $w={32} $ml={5}>
          <I width="16" height="15"><path d="M0 0h16v11H6l-3 4v-4H0z" fill="#fff"/><path d="M3 3h10M3 5.500h10M3 8h6" stroke="#03202e"/></I>
          <Note>1</Note>
        </Tray>
      </Taskbar>
    </Page>
  );
}
